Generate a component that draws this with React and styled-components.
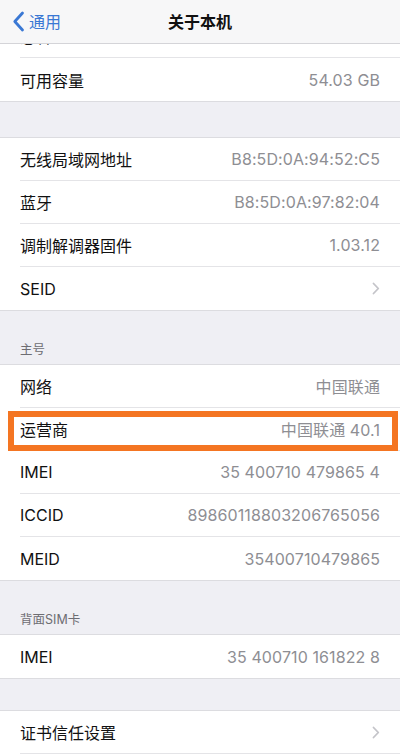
import React from "react";
import styled, { createGlobalStyle } from "styled-components";

const Global = createGlobalStyle`
  html, body {
    margin: 0;
    padding: 0;
    background: #efeff4;
  }
  * {
    box-sizing: border-box;
  }
`;

const sections = [
  {
    rows: [
      { label: "总容量", value: "64 GB" },
      { label: "可用容量", value: "54.03 GB" },
    ],
  },
  {
    rows: [
      { label: "无线局域网地址", value: "B8:5D:0A:94:52:C5" },
      { label: "蓝牙", value: "B8:5D:0A:97:82:04" },
      { label: "调制解调器固件", value: "1.03.12" },
      { label: "SEID", chevron: true },
    ],
  },
  {
    header: "主号",
    rows: [
      { label: "网络", value: "中国联通" },
      { label: "运营商", value: "中国联通 40.1", highlight: true },
      { label: "IMEI", value: "35 400710 479865 4" },
      { label: "ICCID", value: "89860118803206765056" },
      { label: "MEID", value: "35400710479865" },
    ],
  },
  {
    header: "背面SIM卡",
    rows: [{ label: "IMEI", value: "35 400710 161822 8" }],
  },
  {
    gap: 31,
    rows: [{ label: "证书信任设置", chevron: true }, { label: "", value: "" }],
  },
];

const App = () => {
  return (
    <Screen>
      <Global />
      <NavBar>
        <BackButton>
          <svg width="13" height="21" viewBox="0 0 13 21">
            <path
              d="M10.5 2 L2.8 10.5 L10.5 19"
              fill="none"
              stroke="#3a78d4"
              strokeWidth="2.8"
              strokeLinecap="round"
              strokeLinejoin="round"
            />
          </svg>
          <span>通用</span>
        </BackButton>
        <Title>关于本机</Title>
      </NavBar>
      <Viewport>
        <ScrollContent>
          {sections.map((section, i) => (
            <Group
              key={i}
              $gap={i === 0 ? 0 : section.gap || (section.header ? 32 : 35)}
            >
              {section.header && <GroupHeader>{section.header}</GroupHeader>}
              <List>
                {section.rows.map((row, j) => (
                  <Row key={j}>
                    <RowInner $last={j === section.rows.length - 1}>
                      <Label>{row.label}</Label>
                      {row.value && <Value>{row.value}</Value>}
                      {row.chevron && (
                        <svg width="8" height="13" viewBox="0 0 8 13">
                          <path
                            d="M1.5 1.5 L6.3 6.5 L1.5 11.5"
                            fill="none"
                            stroke="#c4c4c9"
                            strokeWidth="1.8"
                            strokeLinecap="round"
                            strokeLinejoin="round"
                          />
                        </svg>
                      )}
                    </RowInner>
                    {row.highlight && <Highlight />}
                  </Row>
                ))}
              </List>
            </Group>
          ))}
        </ScrollContent>
      </Viewport>
    </Screen>
  );
};
export default App;

const Screen = styled.div`
  width: 400px;
  height: 754px;
  display: flex;
  flex-direction: column;
  overflow: hidden;
  background: #efeff4;
  font-family: Inter, "Noto Sans CJK SC", sans-serif;
`;

const NavBar = styled.div`
  position: relative;
  z-index: 2;
  flex: 0 0 44px;
  height: 44px;
  display: flex;
  align-items: center;
  justify-content: center;
  background: #f7f7f8;
  border-bottom: 1px solid #d4d4d8;
`;

const BackButton = styled.div`
  position: absolute;
  left: 12px;
  top: 11px;
  display: flex;
  align-items: center;
  gap: 4px;
  color: #3a78d4;
  font-size: 16px;
  font-family: "Noto Sans CJK SC", sans-serif;
  line-height: 21px;
`;

const Title = styled.div`
  font-size: 16px;
  font-weight: 600;
  color: #111;
  font-family: "Noto Sans CJK SC", sans-serif;
  margin-top: -2px;
`;

const Viewport = styled.div`
  flex: 1;
  overflow: hidden;
`;

const ScrollContent = styled.div`
  margin-top: -30px;
`;

const Group = styled.div`
  padding-top: ${(p) => p.$gap}px;
`;

const GroupHeader = styled.div`
  padding: 0 20px 7px;
  font-size: 12.5px;
  line-height: 14px;
  color: #6d6d72;
  font-family: Inter, "Noto Sans CJK SC", sans-serif;
`;

const List = styled.div`
  background: #fff;
  border-top: 1px solid #dcdce0;
  border-bottom: 1px solid #dcdce0;
`;

const Row = styled.div`
  position: relative;
  padding-left: 20px;
`;

const RowInner = styled.div`
  height: 43px;
  display: flex;
  align-items: center;
  justify-content: space-between;
  padding-right: 20px;
  border-bottom: ${(p) => (p.$last ? "none" : "1px solid #e4e4e7")};
`;

const Label = styled.div`
  font-size: 16px;
  color: #111;
`;

const Value = styled.div`
  font-size: 16px;
  color: #8e8e93;
  letter-spacing: 0.1px;
`;

const Highlight = styled.div`
  position: absolute;
  left: 8px;
  right: 2px;
  top: 3px;
  bottom: 0;
  border: 6px solid #f47522;
  pointer-events: none;
`;
